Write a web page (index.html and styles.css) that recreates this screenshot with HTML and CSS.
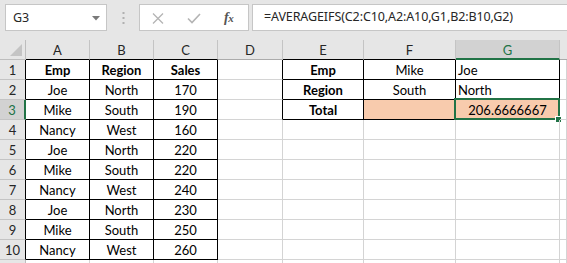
FILE: index.html
```html
<!DOCTYPE html>
<html>
<head>
<meta charset="utf-8">
<link rel="stylesheet" href="styles.css">
</head>
<body>
<div class="toolbar">
  <div class="namebox">
    <span class="nb-text">G3</span>
    <svg class="caret" width="8" height="5" viewBox="0 0 8 5"><path d="M0 0H8L4 4.5Z" fill="#7a7a7a"/></svg>
  </div>
  <svg class="dots" width="3" height="12" viewBox="0 0 3 12"><rect x="0.5" y="0" width="2" height="2" fill="#b0b0b0"/><rect x="0.5" y="5" width="2" height="2" fill="#b0b0b0"/><rect x="0.5" y="10" width="2" height="2" fill="#b0b0b0"/></svg>
  <div class="fbuttons">
    <svg class="btn-x" width="12" height="11" viewBox="0 0 12 11"><path d="M1 0.5L11 10.5M11 0.5L1 10.5" stroke="#b4b4b4" stroke-width="1.3"/></svg>
    <svg class="btn-ok" width="14" height="11" viewBox="0 0 14 11"><path d="M1 5.5L5 9.5L13 1" stroke="#b4b4b4" stroke-width="1.6" fill="none"/></svg>
    <span class="fx">f<span class="fx-x">x</span></span>
  </div>
  <div class="finput">=AVERAGEIFS(C2:C10,A2:A10,G1,B2:B10,G2)</div>
</div>
<div class="sheet">
  <div class="corner"><svg width="12" height="12" viewBox="0 0 12 12"><path d="M12 0V12H0Z" fill="#c4c4c4"/></svg></div>
  <div class="h hb">A</div>
  <div class="h hb">B</div>
  <div class="h hb">C</div>
  <div class="h">D</div>
  <div class="h hb">E</div>
  <div class="h hb">F</div>
  <div class="h hsel">G</div>
  <div class="h hlast"></div>

  <div class="r">1</div>
  <div class="c bk bold">Emp</div><div class="c bk bold">Region</div><div class="c bk bold">Sales</div>
  <div class="c br"></div><div class="c bk bold">Emp</div><div class="c bk">Mike</div><div class="c bk left">Joe</div><div class="c"></div>

  <div class="r">2</div>
  <div class="c bk">Joe</div><div class="c bk">North</div><div class="c bk">170</div>
  <div class="c br"></div><div class="c bk bold">Region</div><div class="c bk">South</div><div class="c bk left">North</div><div class="c"></div>

  <div class="r rsel">3</div>
  <div class="c bk">Mike</div><div class="c bk">South</div><div class="c bk">190</div>
  <div class="c br"></div><div class="c bk bold">Total</div><div class="c bk fill"></div><div class="c bk fill sel">206.6666667<span class="selbox"></span><span class="handle"></span></div><div class="c"></div>

  <div class="r">4</div>
  <div class="c bk">Nancy</div><div class="c bk">West</div><div class="c bk">160</div>
  <div class="c"></div><div class="c"></div><div class="c"></div><div class="c"></div><div class="c"></div>

  <div class="r">5</div>
  <div class="c bk">Joe</div><div class="c bk">North</div><div class="c bk">220</div>
  <div class="c"></div><div class="c"></div><div class="c"></div><div class="c"></div><div class="c"></div>

  <div class="r">6</div>
  <div class="c bk">Mike</div><div class="c bk">South</div><div class="c bk">220</div>
  <div class="c"></div><div class="c"></div><div class="c"></div><div class="c"></div><div class="c"></div>

  <div class="r">7</div>
  <div class="c bk">Nancy</div><div class="c bk">West</div><div class="c bk">240</div>
  <div class="c"></div><div class="c"></div><div class="c"></div><div class="c"></div><div class="c"></div>

  <div class="r">8</div>
  <div class="c bk">Joe</div><div class="c bk">North</div><div class="c bk">230</div>
  <div class="c"></div><div class="c"></div><div class="c"></div><div class="c"></div><div class="c"></div>

  <div class="r">9</div>
  <div class="c bk">Mike</div><div class="c bk">South</div><div class="c bk">250</div>
  <div class="c"></div><div class="c"></div><div class="c"></div><div class="c"></div><div class="c"></div>

  <div class="r">10</div>
  <div class="c bk">Nancy</div><div class="c bk">West</div><div class="c bk">260</div>
  <div class="c"></div><div class="c"></div><div class="c"></div><div class="c"></div><div class="c"></div>

  <div class="r r11"></div>
  <div class="c"></div><div class="c"></div><div class="c"></div>
  <div class="c"></div><div class="c"></div><div class="c"></div><div class="c"></div><div class="c"></div>
</div>
</body>
</html>
```
FILE: styles.css
```css
* { box-sizing: border-box; }
html, body { margin: 0; padding: 0; }
body {
  width: 567px;
  height: 263px;
  overflow: hidden;
  background: #e6e6e6;
  font-family: "Lato", "Noto Sans", sans-serif;
}
.toolbar {
  height: 40px;
  display: flex;
  align-items: flex-start;
  padding-top: 4px;
  font-family: "Noto Sans", "Open Sans", sans-serif;
  font-size: 12.5px;
  color: #262626;
}
.namebox {
  margin-left: 5px;
  width: 102px;
  height: 27px;
  background: #fff;
  border: 1px solid #c6c6c6;
  display: flex;
  align-items: center;
  padding-left: 7px;
  padding-right: 6px;
}
.nb-text { flex: 1; }
.caret { margin-top: 1px; }
.dots { margin: 8px 0 0 15px; }
.fbuttons {
  margin-left: 14px;
  width: 110px;
  height: 27px;
  background: #fff;
  border: 1px solid #c6c6c6;
  display: flex;
  align-items: center;
  padding-left: 12px;
}
.btn-x { margin-top: 1px; }
.btn-ok { margin-left: 23px; margin-top: 1px; }
.fx {
  margin-left: 23px;
  font-family: "Liberation Serif", serif;
  font-style: italic;
  font-weight: bold;
  font-size: 14px;
  color: #555;
  letter-spacing: -0.5px;
}
.fx-x { font-size: 11px; }
.finput {
  margin-left: 3px;
  flex: 1;
  height: 27px;
  background: #fff;
  border: 1px solid #c6c6c6;
  border-right: none;
  padding-left: 11px;
  line-height: 24px;
  letter-spacing: -0.1px;
  white-space: nowrap;
  overflow: hidden;
}
.sheet {
  display: grid;
  grid-template-columns: 26px 64px 64px 64px 65px 81px 92px 104px 1fr;
  grid-auto-rows: 20px;
  background: #fff;
  font-size: 13px;
  color: #000;
}
.corner {
  background: #e6e6e6;
  border-right: 1px solid #bdbdbd;
  border-bottom: 1px solid #bdbdbd;
  display: flex;
  justify-content: flex-end;
  align-items: flex-end;
  padding: 0 3px 3px 0;
}
.h {
  background: #e6e6e6;
  border-right: 1px solid #c4c4c4;
  border-bottom: 1px solid #ababab;
  text-align: center;
  line-height: 20px;
  color: #262626;
}
.hb { border-bottom-color: #000; }
.hsel {
  background: #d2d2d2;
  border-bottom: 2px solid #217346;
  color: #217346;
}
.hlast { border-right: none; }
.r {
  background: #e6e6e6;
  border-right: 1px solid #000;
  border-bottom: 1px solid #c4c4c4;
  text-align: center;
  line-height: 20px;
  color: #262626;
}
.rsel {
  background: #d2d2d2;
  border-right: 2px solid #217346;
  color: #217346;
}
.r11 { border-right-color: #bdbdbd; }
.c {
  border-right: 1px solid #d4d4d4;
  border-bottom: 1px solid #d4d4d4;
  text-align: center;
  line-height: 20px;
  white-space: nowrap;
  position: relative;
}
.bk { border-right-color: #000; border-bottom-color: #000; }
.br { border-right-color: #000; }
.bold { font-weight: bold; }
.left { text-align: left; padding-left: 2px; }
.fill { background: #f8cbad; }
.selbox {
  position: absolute;
  left: -2px;
  top: -2px;
  right: -1px;
  bottom: -1px;
  border: 2px solid #217346;
}
.handle {
  position: absolute;
  right: -3px;
  bottom: -4px;
  width: 7px;
  height: 7px;
  background: #217346;
  border: 1px solid #fff;
}
```
